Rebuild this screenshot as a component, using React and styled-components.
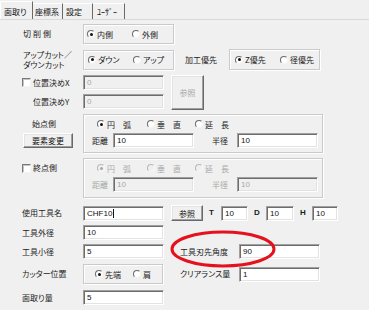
import React from "react";
import styled, { createGlobalStyle } from "styled-components";

const GlobalStyle = createGlobalStyle`
  *, *::before, *::after { box-sizing: border-box; }
  html, body { margin: 0; padding: 0; background: #f0f0f0; }
  body {
    font-family: "Noto Sans CJK JP", "Noto Sans", sans-serif;
    font-size: 8px;
    color: #1b1b1b;
    font-feature-settings: "palt";
  }
`;

const Page = styled.div`
  position: relative;
  width: 369px;
  height: 310px;
  overflow: hidden;
  background: #f0f0f0;
`;

const TabBar = styled.div`
  display: flex;
  align-items: flex-end;
  height: 20px;
  border-bottom: 1px solid #d9d9d9;
`;

const Tab = styled.div`
  width: ${(p) => p.$w}px;
  height: ${(p) => (p.$active ? 18 : 16)}px;
  padding: ${(p) => (p.$active ? 5 : 3)}px 0 0 ${(p) => p.$pl}px;
  line-height: 9px;
  white-space: nowrap;
  border-top: 1px solid #fff;
  border-left: ${(p) => (p.$active ? "1px solid #fff" : "none")};
  border-right: 1px solid #6a6a6a;
  color: #111;
`;

const Body = styled.div`
  padding-left: 22px;
`;

const Row = styled.div`
  display: flex;
  align-items: ${(p) => p.$align || "center"};
  margin-top: ${(p) => p.$mt}px;
`;

const Column = styled.div`
  display: flex;
  flex-direction: column;
  width: ${(p) => p.$w}px;
  flex: none;
`;

const Label = styled.div`
  flex: none;
  width: ${(p) => p.$w}px;
  margin-left: ${(p) => p.$ml || 0}px;
  margin-top: ${(p) => p.$mt || 0}px;
  padding-left: ${(p) => p.$pl || 0}px;
  letter-spacing: ${(p) => p.$ls || 0}px;
  line-height: 10px;
  white-space: nowrap;
  color: ${(p) => (p.$disabled ? "#a8a8a8" : "inherit")};
  font-family: ${(p) => (p.$latin ? '"Liberation Sans", sans-serif' : "inherit")};
  font-weight: ${(p) => (p.$latin ? 700 : 400)};
`;

const Group = styled.div`
  flex: none;
  display: flex;
  flex-direction: ${(p) => (p.$stack ? "column" : "row")};
  align-items: ${(p) => (p.$stack ? "stretch" : "center")};
  width: ${(p) => p.$w}px;
  height: ${(p) => p.$h}px;
  margin-left: ${(p) => p.$ml || 0}px;
  padding: ${(p) => (p.$stack ? "4px 0 0 0" : `0 0 0 ${p.$pl}px`)};
  border: 1px solid #cacaca;
  box-shadow: inset 1px 1px 0 #fff, 1px 1px 0 #fff;
`;

const RadioLine = styled.div`
  display: flex;
  align-items: center;
  height: 10px;
  padding-left: ${(p) => p.$pl}px;
`;

const FieldLine = styled.div`
  display: flex;
  align-items: center;
  margin-top: 4px;
  padding-left: ${(p) => p.$pl}px;
`;

const RadioItem = styled.div`
  flex: none;
  display: inline-flex;
  align-items: center;
  gap: 2px;
  width: ${(p) => p.$w}px;
  white-space: nowrap;
  color: ${(p) => (p.$disabled ? "#a8a8a8" : "inherit")};
`;

const RadioMark = styled.span`
  flex: none;
  display: flex;
  align-items: center;
  justify-content: center;
  width: 8px;
  height: 8px;
  border-radius: 50%;
  border: 1px solid;
  border-color: ${(p) =>
    p.$disabled ? "#b8b8b8 #f8f8f8 #f8f8f8 #b8b8b8" : "#6a6a6a #f4f4f4 #f4f4f4 #6a6a6a"};
  background: ${(p) => (p.$disabled ? "#f0f0f0" : "#fff")};

  &::after {
    content: "";
    display: ${(p) => (p.$checked ? "block" : "none")};
    width: 3px;
    height: 3px;
    border-radius: 50%;
    background: ${(p) => (p.$disabled ? "#a8a8a8" : "#111")};
  }
`;

const CheckItem = styled.div`
  flex: none;
  display: flex;
  align-items: center;
  gap: 2px;
  width: ${(p) => p.$w}px;
  margin-top: ${(p) => p.$mt || 0}px;
  line-height: 10px;
  white-space: nowrap;
`;

const CheckMark = styled.span`
  flex: none;
  width: 9px;
  height: 9px;
  border: 1px solid;
  border-color: #7a7a7a #f4f4f4 #f4f4f4 #7a7a7a;
  box-shadow: inset 1px 1px 0 #c4c4c4;
  background: #fff;
`;

const Field = styled.div`
  flex: none;
  display: flex;
  align-items: center;
  width: ${(p) => p.$w}px;
  height: 15px;
  margin-left: ${(p) => p.$ml || 0}px;
  padding-left: 3px;
  border: 1px solid;
  border-color: #a0a0a0 #fff #fff #a0a0a0;
  box-shadow: inset 1px 1px 0 #6d6d6d, inset -1px -1px 0 #e3e3e3;
  background: ${(p) => (p.$disabled ? "#f0f0f0" : "#fff")};
  color: ${(p) => (p.$disabled ? "#a8a8a8" : "#111")};
  font-family: "Liberation Sans", "Noto Sans CJK JP", sans-serif;
  font-size: 8px;
  white-space: nowrap;
`;

const Caret = styled.span`
  display: inline-block;
  width: 1px;
  height: 9px;
  margin-left: 1px;
  background: #111;
`;

const Button = styled.div`
  flex: none;
  display: flex;
  align-items: center;
  justify-content: center;
  width: ${(p) => p.$w}px;
  height: ${(p) => p.$h}px;
  margin-left: ${(p) => p.$ml || 0}px;
  margin-top: ${(p) => p.$mt || 0}px;
  border: 1px solid;
  border-color: #fff #696969 #696969 #fff;
  box-shadow: inset -1px -1px 0 #a0a0a0, inset 1px 1px 0 #e3e3e3;
  background: #f0f0f0;
  color: ${(p) => (p.$disabled ? "#a8a8a8" : "#111")};
  white-space: nowrap;
`;

const Mark = styled.svg`
  position: absolute;
  left: 170px;
  top: 230px;
  pointer-events: none;
`;

const Radio = ({ w, checked, disabled, children }) => (
  <RadioItem $w={w} $disabled={disabled}>
    <RadioMark $checked={checked} $disabled={disabled} />
    <span>{children}</span>
  </RadioItem>
);

const PointGroup = ({ disabled, h }) => (
  <Group $stack $w={240} $h={h}>
    <RadioLine $pl={13}>
      <Radio w={50} checked disabled={disabled}>円　弧</Radio>
      <Radio w={48} disabled={disabled}>垂　直</Radio>
      <Radio w={50} disabled={disabled}>延　長</Radio>
    </RadioLine>
    <FieldLine $pl={8}>
      <Label $w={21} $disabled={disabled}>距離</Label>
      <Field $w={81} $disabled={disabled}>10</Field>
      <Label $w={25} $ml={18} $disabled={disabled}>半径</Label>
      <Field $w={81} $disabled={disabled}>10</Field>
    </FieldLine>
  </Group>
);

export default function App() {
  return (
    <Page>
      <GlobalStyle />
      <TabBar>
        <Tab $active $w={33} $pl={3}>面取り</Tab>
        <Tab $w={30} $pl={2}>座標系</Tab>
        <Tab $w={30} $pl={3}>設定</Tab>
        <Tab $w={32} $pl={4}>ﾕｰｻﾞｰ</Tab>
      </TabBar>

      <Body>
        <Row $mt={4}>
          <Label $w={61} $pl={1} $ls={2}>切削側</Label>
          <Group $w={91} $h={20} $pl={3}>
            <Radio w={45} checked>内側</Radio>
            <Radio w={40}>外側</Radio>
          </Group>
        </Row>

        <Row $mt={5}>
          <Label $w={61} $pl={1}>
            アップカット／
            <br />
            ダウンカット
          </Label>
          <Group $w={91} $h={20} $pl={4}>
            <Radio w={45} checked>ダウン</Radio>
            <Radio w={40}>アップ</Radio>
          </Group>
          <Label $w={44} $ml={11}>加工優先</Label>
          <Group $w={91} $h={21} $pl={5}>
            <Radio w={45} checked>Z優先</Radio>
            <Radio w={40}>径優先</Radio>
          </Group>
        </Row>

        <Row $mt={5} $align="flex-start">
          <Column $w={142}>
            <Row $mt={0}>
              <CheckItem $w={61}>
                <CheckMark />
                <span>位置決めX</span>
              </CheckItem>
              <Field $w={81} $disabled>0</Field>
            </Row>
            <Row $mt={4}>
              <Label $w={61} $pl={11}>位置決めY</Label>
              <Field $w={81} $disabled>0</Field>
            </Row>
          </Column>
          <Button $w={33} $h={35} $ml={7} $disabled>参照</Button>
        </Row>

        <Row $mt={4} $align="flex-start">
          <Column $w={61}>
            <Label $w={61} $pl={10} $mt={5}>始点側</Label>
            <Button $w={50} $h={15} $ml={1} $mt={4}>要素変更</Button>
          </Column>
          <PointGroup h={39} />
        </Row>

        <Row $mt={5} $align="flex-start">
          <CheckItem $w={61} $mt={5}>
            <CheckMark />
            <span>終点側</span>
          </CheckItem>
          <PointGroup disabled h={40} />
        </Row>

        <Row $mt={7}>
          <Label $w={61}>使用工具名</Label>
          <Field $w={81}>
            CHF10
            <Caret />
          </Field>
          <Button $w={32} $h={16} $ml={7}>参照</Button>
          <Label $w={12} $ml={6} $latin>T</Label>
          <Field $w={27}>10</Field>
          <Label $w={12} $ml={6} $latin>D</Label>
          <Field $w={28}>10</Field>
          <Label $w={12} $ml={6} $latin>H</Label>
          <Field $w={26}>10</Field>
        </Row>

        <Row $mt={4}>
          <Label $w={61}>工具外径</Label>
          <Field $w={81}>10</Field>
        </Row>

        <Row $mt={4}>
          <Label $w={61}>工具小径</Label>
          <Field $w={81}>5</Field>
          <Label $w={59} $ml={16}>工具刃先角度</Label>
          <Field $w={81}>90</Field>
        </Row>

        <Row $mt={5}>
          <Label $w={61}>カッター位置</Label>
          <Group $w={80} $h={20} $pl={11}>
            <Radio w={38} checked>先端</Radio>
            <Radio w={24}>肩</Radio>
          </Group>
          <Label $w={59} $ml={17}>クリアランス量</Label>
          <Field $w={81}>1</Field>
        </Row>

        <Row $mt={6}>
          <Label $w={61}>面取り量</Label>
          <Field $w={81}>5</Field>
        </Row>
      </Body>

      <Mark width="106" height="38" viewBox="0 0 106 38">
        <ellipse cx="53" cy="19" rx="51" ry="17" fill="none" stroke="#e3121c" strokeWidth="3" />
      </Mark>
    </Page>
  );
}
